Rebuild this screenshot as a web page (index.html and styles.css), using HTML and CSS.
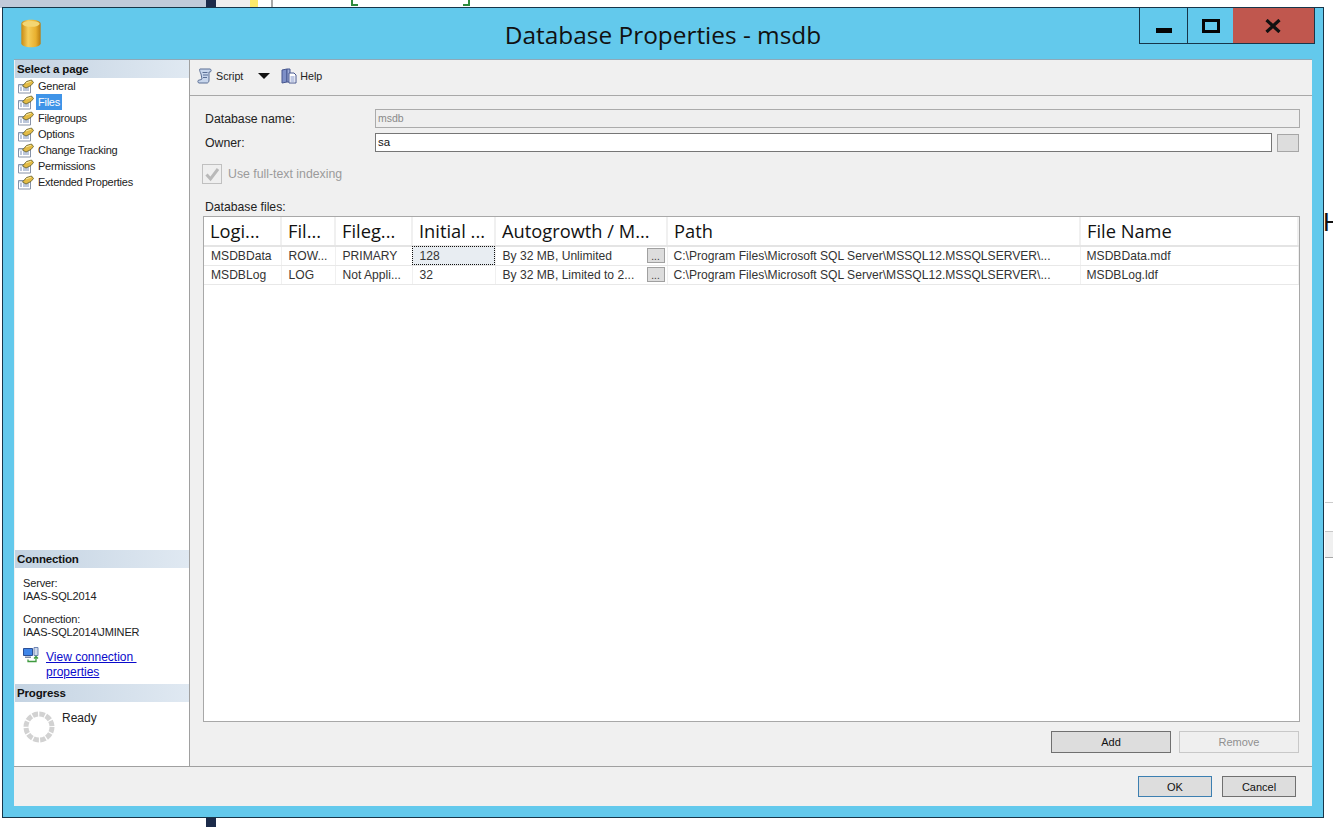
FILE: index.html
```html
<!DOCTYPE html>
<html lang="en">
<head>
    <meta charset="utf-8">
    <title>Database Properties - msdb</title>
    <link rel="stylesheet" href="styles.css">
</head>
<body>
    <svg class="icon-defs" width="0" height="0">
        <defs>
            <symbol id="page-icon" viewBox="0 0 16 16">
                <path d="M.5 6.500h12v8.500H.5z" fill="#fff" stroke="#8793a8"/>
                <path d="M1 7h11v1.500H1z" fill="#c9d3e2"/>
                <path d="M2 9.500h2v1H2zM5 9.500h6v1H5zM2 11.500h2v1H2zM5 11.500h6v1H5z" fill="#7a90b8"/>
                <path d="M4.500 8 8.500 3.500 13.500 2 15.500 4.500 13 7.500 8 10z" fill="#e3bb45" stroke="#5e5a2a" stroke-width=".8"/>
                <path d="M8 5 13 3.200" stroke="#f7e7a0" fill="none"/>
            </symbol>
        </defs>
    </svg>

    <!-- what shows of the desktop behind the dialog -->
    <div class="bg-strip bg-left"></div>
    <div class="bg-strip bg-navy"></div>
    <div class="bg-strip bg-navy-low"></div>
    <div class="bg-strip bg-pale"></div>
    <div class="bg-strip bg-yellow"></div>
    <div class="bg-strip bg-rule"></div>
    <div class="bg-corner corner-l"></div>
    <div class="bg-corner corner-r"></div>
    <div class="bg-letter">H</div>
    <div class="bg-strip bg-line"></div>
    <div class="bg-strip bg-tick"></div>

    <div class="window">
        <div class="titlebar">
            <div class="title-left">
                <svg class="db-icon" viewBox="0 0 22 30" width="22" height="29">
                    <defs>
                        <linearGradient id="dbfill" x1="0" x2="1" y1="0" y2="0">
                            <stop offset="0" stop-color="#c98a12"/>
                            <stop offset=".35" stop-color="#f5cf5c"/>
                            <stop offset=".75" stop-color="#e9b02f"/>
                            <stop offset="1" stop-color="#b97c10"/>
                        </linearGradient>
                    </defs>
                    <path d="M1 5c0-5.500 20-5.500 20 0v20c0 5.500-20 5.500-20 0z" fill="url(#dbfill)"/>
                    <ellipse cx="11" cy="5" rx="9" ry="3" fill="#f3d673"/>
                </svg>
            </div>
            <div class="title-text">Database Properties - msdb</div>
            <div class="win-controls">
                <div class="win-btn btn-min"><span class="min-glyph"></span></div>
                <div class="win-btn btn-max"><span class="max-glyph"></span></div>
                <div class="win-btn btn-close">
                    <svg viewBox="0 0 16 14" width="16" height="14"><path d="M1.500 1 14.500 13M14.500 1 1.500 13" stroke="#111" stroke-width="3.200" fill="none"/></svg>
                </div>
            </div>
        </div>

        <div class="client">
            <div class="client-top">
                <div class="sidebar">
                    <div class="side-head">Select a page</div>
                    <ul class="page-list">
                        <li><svg class="page-ico"><use href="#page-icon"/></svg><span>General</span></li>
                        <li><svg class="page-ico"><use href="#page-icon"/></svg><span class="selected">Files</span></li>
                        <li><svg class="page-ico"><use href="#page-icon"/></svg><span>Filegroups</span></li>
                        <li><svg class="page-ico"><use href="#page-icon"/></svg><span>Options</span></li>
                        <li><svg class="page-ico"><use href="#page-icon"/></svg><span>Change Tracking</span></li>
                        <li><svg class="page-ico"><use href="#page-icon"/></svg><span>Permissions</span></li>
                        <li><svg class="page-ico"><use href="#page-icon"/></svg><span>Extended Properties</span></li>
                    </ul>
                    <div class="side-head">Connection</div>
                    <div class="conn-body">
                        <div class="conn-block">Server:<br>IAAS-SQL2014</div>
                        <div class="conn-block">Connection:<br>IAAS-SQL2014\JMINER</div>
                        <div class="conn-link">
                            <svg viewBox="0 0 16 16" width="16" height="16">
                                <path d="M.5 1.500h9v7h-9z" fill="#3f86e8" stroke="#2c4f96"/>
                                <path d="M11 .5h4v8h-4z" fill="#cfd9ea" stroke="#6f86b5"/>
                                <path d="M2 9.500h6V11H2z" fill="#7d8ba3"/>
                                <path d="M5 12.500v2h8V10M11 11.500l2-2 2 2" fill="none" stroke="#3f9a3f" stroke-width="1.300"/>
                            </svg>
                            <a href="#">View connection&nbsp;<br>properties</a>
                        </div>
                    </div>
                    <div class="side-head">Progress</div>
                    <div class="progress-body">
                        <svg class="spinner" viewBox="0 0 32 32" width="32" height="32">
                            <circle cx="16" cy="16" r="13" fill="none" stroke="#d2d2d2" stroke-width="5" stroke-dasharray="5.500 1.300"/>
                        </svg>
                        <span class="ready">Ready</span>
                    </div>
                </div>

                <div class="main">
                    <div class="toolbar">
                        <svg viewBox="0 0 16 16" width="16" height="16">
                            <path d="M3 1h10c1.500 0 1.500 3 0 3h-1v8c0 2-1 3-2 3H2c-1.500 0-1.500-3 0-3h1l2-1-1-5C3 4 2 1 3 1z" fill="#c8d6ec" stroke="#5b6f95"/>
                            <path d="M5.500 4.500h5M6 7h5M6 9.500h4" stroke="#5b6f95"/>
                        </svg>
                        <span class="tool-label">Script</span>
                        <span class="caret"></span>
                        <svg viewBox="0 0 16 16" width="16" height="16">
                            <path d="M1 2l5-1v13l-5 1z" fill="#7d8fc7" stroke="#47578f"/>
                            <path d="M6 1h3v13H6z" fill="#9dacd8" stroke="#47578f"/>
                            <path d="M8 5h5l2 2v8H8z" fill="#fff" stroke="#47578f"/>
                            <path d="M9.500 9h4M9.500 11h4M9.500 13h4" stroke="#7d8fc7"/>
                        </svg>
                        <span class="tool-label">Help</span>
                    </div>

                    <div class="form-pane">
                        <div class="form-row">
                            <label class="form-label">Database name:</label>
                            <div class="textbox textbox-off">msdb</div>
                        </div>
                        <div class="form-row row-owner">
                            <label class="form-label">Owner:</label>
                            <div class="textbox">sa</div>
                            <div class="browse-btn"></div>
                        </div>
                        <div class="check-row">
                            <span class="checkbox">
                                <svg viewBox="0 0 18 18" width="18" height="18"><path d="M3.500 9.500 7.500 14 15 4" fill="none" stroke="#b9b9b9" stroke-width="3"/></svg>
                            </span>
                            <span class="check-label">Use full-text indexing</span>
                        </div>
                        <div class="files-label">Database files:</div>
                        <div class="grid-box">
                            <table class="files-grid">
                                <colgroup>
                                    <col class="c-logical">
                                    <col class="c-type">
                                    <col class="c-group">
                                    <col class="c-size">
                                    <col class="c-growth">
                                    <col class="c-path">
                                    <col>
                                </colgroup>
                                <thead>
                                    <tr>
                                        <th>Logi...</th>
                                        <th>Fil...</th>
                                        <th>Fileg...</th>
                                        <th>Initial ...</th>
                                        <th>Autogrowth / M...</th>
                                        <th>Path</th>
                                        <th>File Name</th>
                                    </tr>
                                </thead>
                                <tbody>
                                    <tr>
                                        <td>MSDBData</td>
                                        <td>ROW...</td>
                                        <td>PRIMARY</td>
                                        <td class="cell-focus">128</td>
                                        <td><div class="cell-growth">By 32 MB, Unlimited<span class="dots-btn">...</span></div></td>
                                        <td>C:\Program Files\Microsoft SQL Server\MSSQL12.MSSQLSERVER\...</td>
                                        <td>MSDBData.mdf</td>
                                    </tr>
                                    <tr>
                                        <td>MSDBLog</td>
                                        <td>LOG</td>
                                        <td>Not Appli...</td>
                                        <td>32</td>
                                        <td><div class="cell-growth">By 32 MB, Limited to 2...<span class="dots-btn">...</span></div></td>
                                        <td>C:\Program Files\Microsoft SQL Server\MSSQL12.MSSQLSERVER\...</td>
                                        <td>MSDBLog.ldf</td>
                                    </tr>
                                </tbody>
                            </table>
                        </div>
                        <div class="grid-buttons">
                            <div class="push-btn">Add</div>
                            <div class="push-btn push-off">Remove</div>
                        </div>
                    </div>
                </div>
            </div>

            <div class="footer">
                <div class="foot-btn foot-default">OK</div>
                <div class="foot-btn">Cancel</div>
            </div>
        </div>
    </div>
</body>
</html>
```

FILE: styles.css
```css
html,
body {
    margin: 0;
    height: 100%;
    overflow: hidden;
    background: #fff;
}

body {
    position: relative;
    font-family: "Liberation Sans", Arial, sans-serif;
    font-size: 11px;
    color: #222;
}

.icon-defs {
    position: absolute;
}

/* desktop behind the dialog */
.bg-strip {
    position: absolute;
}

.bg-left {
    left: 0;
    top: 0;
    width: 206px;
    height: 8px;
    background: #c1cad9;
}

.bg-navy {
    left: 206px;
    top: 0;
    width: 10px;
    height: 8px;
    background: #1c2b4a;
}

.bg-navy-low {
    left: 206px;
    top: 818px;
    width: 10px;
    height: 9px;
    background: #1c2b4a;
}

.bg-pale {
    left: 216px;
    top: 0;
    width: 34px;
    height: 8px;
    background: #eeeeee;
}

.bg-yellow {
    left: 250px;
    top: 0;
    width: 8px;
    height: 8px;
    background: #fbe96a;
}

.bg-rule {
    left: 271px;
    top: 0;
    width: 2px;
    height: 8px;
    background: #a8a8a8;
}

.bg-corner {
    position: absolute;
    top: 0;
    width: 5px;
    height: 4px;
    border-bottom: 2px solid #2e8b3c;
}

.corner-l {
    left: 351px;
    border-left: 2px solid #2e8b3c;
}

.corner-r {
    left: 463px;
    border-right: 2px solid #2e8b3c;
}

.bg-letter {
    position: absolute;
    left: 1323px;
    top: 207px;
    font-size: 26px;
    color: #111;
}

.bg-line {
    left: 1325px;
    top: 502px;
    width: 8px;
    height: 1px;
    background: #cccccc;
}

.bg-tick {
    left: 1325px;
    top: 531px;
    width: 8px;
    height: 27px;
    box-sizing: border-box;
    background: #f0f0f0;
    border-top: 1px solid #c8c8c8;
    border-bottom: 1px solid #a8a8a8;
}

/* dialog */
.window {
    position: absolute;
    left: 2px;
    top: 7px;
    width: 1322px;
    height: 811px;
    box-sizing: border-box;
    border: 1px solid #17364a;
    background: #63c9ec;
    display: flex;
    flex-direction: column;
}

.titlebar {
    height: 51px;
    flex: none;
    display: grid;
    grid-template-columns: 1fr auto 1fr;
}

.title-left {
    padding: 11px 0 0 17px;
}

.title-text {
    font-family: "Open Sans", sans-serif;
    font-size: 24.400px;
    line-height: 53px;
    color: #111;
}

.win-controls {
    justify-self: end;
    display: flex;
    height: 37px;
    margin: -1px 8px 0 0;
    box-sizing: border-box;
    border: 1px solid #17364a;
}

.win-btn {
    display: flex;
    align-items: center;
    justify-content: center;
    box-sizing: border-box;
}

.btn-min {
    width: 48px;
    border-right: 1px solid #17364a;
}

.btn-max {
    width: 45px;
}

.btn-close {
    width: 81px;
    background: #c0574e;
}

.btn-close svg {
    margin-right: 2px;
}

.min-glyph {
    width: 16px;
    height: 5px;
    margin-top: 10px;
    background: #050505;
}

.max-glyph {
    width: 18px;
    height: 14px;
    border: 3px solid #050505;
    box-sizing: border-box;
}

.client {
    flex: 1;
    margin: 0 11px 11px 11px;
    display: flex;
    flex-direction: column;
    background: #f0f0f0;
    border-top: 1px solid #8fa9b8;
    min-height: 0;
}

.client-top {
    flex: 1;
    display: flex;
    min-height: 0;
    border-bottom: 1px solid #a0a0a0;
}

/* left column */
.sidebar {
    width: 174px;
    flex: none;
    display: flex;
    flex-direction: column;
    background: #fff;
    border-right: 1px solid #a0a0a0;
    margin-left: 1px;
}

.side-head {
    height: 18px;
    line-height: 18px;
    padding-left: 2px;
    font-size: 11.500px;
    font-weight: bold;
    letter-spacing: -0.15px;
    color: #111;
    background: linear-gradient(to right, #c4d3e2, #e0e9f2);
}

.page-list {
    list-style-type: none;
    margin: 0;
    padding: 0 0 0 3px;
    height: 472px;
    letter-spacing: -0.25px;
}

.page-list li {
    height: 16px;
    display: flex;
    align-items: center;
}

.page-ico {
    width: 16px;
    height: 16px;
    flex: none;
    margin-right: 2px;
}

.page-list span {
    padding: 0 2px;
    line-height: 16px;
}

.page-list .selected {
    background: #3f94e8;
    color: #fff;
}

.conn-body {
    height: 116px;
    padding: 9px 0 0 8px;
    box-sizing: border-box;
    line-height: 13px;
}

.conn-block {
    margin-bottom: 10px;
    letter-spacing: -0.15px;
}

.conn-link {
    display: flex;
    gap: 7px;
    margin-top: 11px;
    font-size: 12px;
}

.conn-link svg {
    margin-top: -3px;
}

.conn-link a {
    color: #0a0acb;
    line-height: 15px;
}

.progress-body {
    flex: 1;
    display: flex;
    padding: 9px 0 0 8px;
}

.ready {
    margin-left: 7px;
    font-size: 12px;
    line-height: 15px;
}

/* right column */
.main {
    flex: 1;
    min-width: 0;
    display: flex;
    flex-direction: column;
}

.toolbar {
    height: 36px;
    flex: none;
    box-sizing: border-box;
    display: flex;
    align-items: center;
    padding: 0 0 4px 7px;
    border-bottom: 1px solid #a8a8a8;
    font-size: 10.700px;
}

.tool-label {
    margin-left: 3px;
}

.caret {
    width: 0;
    height: 0;
    margin: 0 11px 0 15px;
    border-left: 6px solid transparent;
    border-right: 6px solid transparent;
    border-top: 6px solid #111;
}

.form-pane {
    flex: 1;
    min-height: 0;
    display: flex;
    flex-direction: column;
    padding: 13px 12px 0 13px;
}

.form-row {
    display: flex;
    align-items: center;
    font-size: 12.300px;
}

.row-owner {
    margin: 5px 1px 0 0;
}

.form-label {
    width: 172px;
    flex: none;
    padding-left: 2px;
    box-sizing: border-box;
}

.textbox {
    flex: 1;
    height: 19px;
    box-sizing: border-box;
    border: 1px solid #767676;
    background: #fff;
    line-height: 17px;
    padding-left: 2px;
    font-size: 11.500px;
    color: #111;
}

.textbox-off {
    background: #efefef;
    border-color: #ababab;
    color: #8a8a8a;
    font-size: 10.500px;
}

.browse-btn {
    width: 22px;
    height: 18px;
    margin-left: 5px;
    box-sizing: border-box;
    border: 1px solid #a6a6a6;
    background: #dddddd;
}

.check-row {
    display: flex;
    align-items: center;
    margin: 12px 0 0 -1px;
}

.checkbox {
    width: 20px;
    height: 20px;
    box-sizing: border-box;
    border: 1px solid #c0c0c0;
    background: #efefef;
    display: flex;
    align-items: center;
    justify-content: center;
}

.check-label {
    margin-left: 6px;
    color: #9b9b9b;
    font-size: 12.300px;
}

.files-label {
    margin: 16px 0 0 2px;
    line-height: 14px;
    font-size: 12.200px;
}

.grid-box {
    height: 506px;
    flex: none;
    margin-top: 2px;
    box-sizing: border-box;
    border: 1px solid #a8a8a8;
    background: #fff;
}

.files-grid {
    width: 100%;
    table-layout: fixed;
    border-collapse: collapse;
    font-size: 12.100px;
}

.c-logical {
    width: 77px;
}

.c-type {
    width: 54px;
}

.c-group {
    width: 77px;
}

.c-size {
    width: 83px;
}

.c-growth {
    width: 172px;
}

.c-path {
    width: 413px;
}

.files-grid th {
    height: 29px;
    padding: 0 0 2px 6px;
    box-sizing: border-box;
    font-family: "Open Sans", sans-serif;
    font-size: 18.300px;
    font-weight: normal;
    text-align: left;
    white-space: nowrap;
    overflow: hidden;
    color: #111;
    border-right: 2px solid #f0f0f0;
    border-bottom: 2px solid #e4e4e4;
}

.files-grid td {
    height: 19px;
    padding: 0 0 0 7px;
    box-sizing: border-box;
    white-space: nowrap;
    overflow: hidden;
    color: #333;
    border-right: 1px solid #f0f0f0;
    border-bottom: 1px solid #e8e8e8;
}

.files-grid td:nth-child(n+6) {
    padding-left: 6px;
}

.files-grid .cell-focus {
    background: #e8edf2;
    outline: 1px dotted #111;
    outline-offset: -1px;
}

.cell-growth {
    display: flex;
    align-items: center;
    justify-content: space-between;
    padding-right: 2px;
}

.dots-btn {
    width: 18px;
    height: 15px;
    flex: none;
    box-sizing: border-box;
    border: 1px solid #a0a0a0;
    background: #dddddd;
    text-align: center;
    line-height: 15px;
    font-size: 10px;
}

.grid-buttons {
    display: flex;
    justify-content: flex-end;
    gap: 8px;
    margin: 9px 1px 0 0;
}

.push-btn,
.foot-btn {
    box-sizing: border-box;
    text-align: center;
    border: 1px solid #707070;
    background: #dddddd;
    color: #111;
}

.push-btn {
    width: 120px;
    height: 22px;
    line-height: 21px;
}

.push-off {
    background: #efefef;
    border-color: #c8c8c8;
    color: #8f8f8f;
}

.footer {
    height: 39px;
    flex: none;
    display: flex;
    justify-content: flex-end;
    gap: 10px;
    padding: 9px 16px 0 0;
    box-sizing: border-box;
}

.foot-btn {
    width: 74px;
    height: 21px;
    line-height: 20px;
}

.foot-default {
    border-color: #3c7fb1;
}
```
